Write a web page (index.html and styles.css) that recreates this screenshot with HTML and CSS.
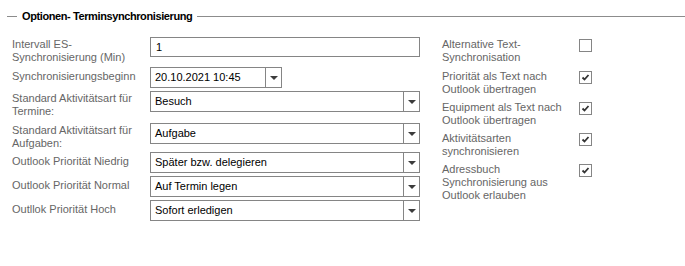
FILE: index.html
```html
<!DOCTYPE html>
<html lang="de">
<head>
    <meta charset="UTF-8">
    <meta name="viewport" content="width=device-width, initial-scale=1.0">
    <title>Optionen- Terminsynchronisierung</title>
    <link rel="stylesheet" href="styles.css">
</head>
<body>
    <div class="group">
        <div class="group-title">
            <span class="rule short"></span>
            <span class="caption">Optionen- Terminsynchronisierung</span>
            <span class="rule long"></span>
        </div>

        <div class="columns">
            <div class="form-left">
                <label class="two">Intervall ES-Synchronisierung (Min)</label>
                <div class="textbox">1</div>

                <label>Synchronisierungsbeginn</label>
                <div class="combo date"><span class="value">20.10.2021 10:45</span><span class="drop"></span></div>

                <label class="two">Standard Aktivitätsart für Termine:</label>
                <div class="combo"><span class="value">Besuch</span><span class="drop"></span></div>

                <label class="two">Standard Aktivitätsart für Aufgaben:</label>
                <div class="combo"><span class="value">Aufgabe</span><span class="drop"></span></div>

                <label>Outlook Priorität Niedrig</label>
                <div class="combo"><span class="value">Später bzw. delegieren</span><span class="drop"></span></div>

                <label>Outlook Priorität Normal</label>
                <div class="combo"><span class="value">Auf Termin legen</span><span class="drop"></span></div>

                <label>Outllok Priorität Hoch</label>
                <div class="combo"><span class="value">Sofort erledigen</span><span class="drop"></span></div>
            </div>

            <div class="form-right">
                <label>Alternative Text-Synchronisation</label>
                <span class="check"></span>

                <label>Priorität als Text nach Outlook übertragen</label>
                <span class="check on"><svg viewBox="0 0 11 11"><path d="M2.5 5.5 L4.5 7.5 L8.5 3"/></svg></span>

                <label>Equipment als Text nach Outlook übertragen</label>
                <span class="check on"><svg viewBox="0 0 11 11"><path d="M2.5 5.5 L4.5 7.5 L8.5 3"/></svg></span>

                <label>Aktivitätsarten synchronisieren</label>
                <span class="check on"><svg viewBox="0 0 11 11"><path d="M2.5 5.5 L4.5 7.5 L8.5 3"/></svg></span>

                <label>Adressbuch Synchronisierung aus Outlook erlauben</label>
                <span class="check on"><svg viewBox="0 0 11 11"><path d="M2.5 5.5 L4.5 7.5 L8.5 3"/></svg></span>
            </div>
        </div>
    </div>
</body>
</html>
```

FILE: styles.css
```css
body {
    margin: 0;
    background-color: #ffffff;
    font-family: "Liberation Sans", Arial, sans-serif;
    font-size: 11px;
    line-height: 13px;
    color: #000;
}

.group-title {
    display: flex;
    align-items: center;
    height: 13px;
    margin-top: 10px;
    padding-left: 7px;
}

.rule {
    height: 1px;
    background-color: #8c8c8c;
}

.rule.short {
    width: 10px;
}

.rule.long {
    flex: 1;
}

.caption {
    font-weight: bold;
    letter-spacing: -0.4px;
    padding: 0 5px;
}

.columns {
    display: flex;
    gap: 22px;
    margin-top: 14px;
    padding-left: 12px;
}

.form-left {
    display: grid;
    grid-template-columns: 138px 270px;
    grid-template-rows: 30px 24px 32px 29px 24px 24px 21px;
}

.form-left label,
.form-right label {
    color: #666666;
    padding-top: 3px;
}

.form-left label.two {
    padding-top: 1px;
}

.textbox,
.combo {
    box-sizing: border-box;
    border: 1px solid #858585;
    background-color: #fff;
}

.textbox {
    height: 20px;
    padding-left: 5px;
    line-height: 18px;
}

.combo {
    display: flex;
    height: 21px;
}

.combo.date {
    width: 132px;
}

.combo .value {
    flex: 1;
    padding-left: 4px;
    line-height: 19px;
    white-space: nowrap;
}

.combo .drop {
    width: 15px;
    border-left: 1px solid #858585;
    display: flex;
    align-items: center;
    justify-content: center;
}

.combo .drop::after {
    content: "";
    width: 0;
    height: 0;
    border-left: 4px solid transparent;
    border-right: 4px solid transparent;
    border-top: 4px solid #3c3c3c;
    margin-top: 1px;
}

.form-right {
    display: grid;
    grid-template-columns: 137px 13px;
    grid-template-rows: 32px 31px 31px 31px auto;
}

.form-right label {
    padding-top: 1px;
    padding-right: 5px;
}

.check {
    box-sizing: border-box;
    width: 13px;
    height: 13px;
    margin-top: 2px;
    border: 1px solid #858585;
    background-color: #fff;
}

.check svg {
    display: block;
    width: 11px;
    height: 11px;
}

.check svg path {
    fill: none;
    stroke: #333333;
    stroke-width: 1.8;
}
```
